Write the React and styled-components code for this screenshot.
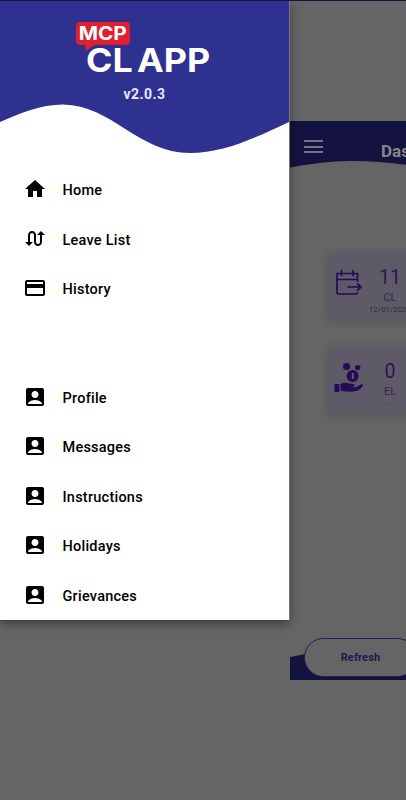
import React from "react";
import styled, { createGlobalStyle } from "styled-components";
import { MdHome, MdSwapCalls, MdCreditCard, MdAccountBox } from "react-icons/md";

const Global = createGlobalStyle`
  * { box-sizing: border-box; }
  body { margin: 0; background: #656565; font-family: Roboto, sans-serif; }
`;

const Screen = styled.div`
  display: grid;
  grid-template-columns: 290px 116px;
  width: 406px;
  height: 800px;
  overflow: hidden;
  background: #656565;
  border-top: 1px solid #15133c;
`;

const Drawer = styled.nav`
  height: 620px;
  background: #fff;
  box-shadow: 0 3px 9px rgba(0, 0, 0, 0.38);
  border-bottom: 1px solid #444;
  border-right: 1px solid #777;
  z-index: 1;
`;

const Header = styled.header`
  position: relative;
  height: 165px;
  padding-top: 21px;
`;

const HeaderWave = styled.svg`
  position: absolute;
  inset: 0;
  display: block;
`;

const Logo = styled.div`
  position: relative;
  width: 140px;
  height: 53px;
  margin-left: 76px;
  color: #fff;
  font-family: Inter, sans-serif;
`;

const LogoBubble = styled.div`
  width: 54px;
  height: 23px;
  border-radius: 4px;
  background: #e0202f;
`;

const BubbleTail = styled.svg`
  position: absolute;
  left: 8px;
  top: 22px;
`;

const LogoTag = styled.div`
  padding-left: 2.5px;
  font-size: 19px;
  font-weight: 700;
  line-height: 24px;
  transform: scaleX(1.09);
  transform-origin: left;
`;

const LogoName = styled.div`
  position: relative;
  display: flex;
  gap: 4px;
  width: max-content;
  margin-left: 9.5px;
  font-size: 33px;
  font-weight: 700;
  line-height: 30px;
  white-space: nowrap;
  transform: scaleX(1.085);
  transform-origin: left;
`;

const Version = styled.div`
  position: relative;
  margin-top: 10px;
  text-align: center;
  color: #e8e8ff;
  font-size: 14px;
  font-weight: 700;
  line-height: 18px;
  letter-spacing: 0.45px;
`;

const Menu = styled.div`
  display: flex;
  flex-direction: column;
  gap: 59px;
`;

const MenuGroup = styled.div`
  display: grid;
  grid-auto-rows: 49.5px;
`;

const MenuItem = styled.a`
  display: flex;
  align-items: center;
  gap: 15.2px;
  padding-left: 23.3px;
  color: #000;
  font-size: 14.5px;
  font-weight: 500;
  letter-spacing: 0.24px;
  svg { width: 24px; height: 24px; margin-top: -3px; }
`;

const Dashboard = styled.main`
  display: flex;
  flex-direction: column;
  width: 290px;
  height: 559px;
  margin-top: 120px;
`;

const TopBar = styled.header`
  position: relative;
  display: flex;
  height: 50px;
`;

const TopWave = styled.svg`
  position: absolute;
  inset: 0;
`;

const MenuButton = styled.div`
  position: relative;
  display: flex;
  flex-direction: column;
  gap: 3.5px;
  margin: 19px 0 0 14px;
`;

const MenuBar = styled.span`
  width: 19px;
  height: 2px;
  background: #73738a;
`;

const Title = styled.h1`
  position: relative;
  margin: 20px 0 0 58px;
  color: #85858c;
  font-size: 17px;
  font-weight: 700;
  line-height: 20px;
`;

const Cards = styled.section`
  display: flex;
  flex-direction: column;
  gap: 28px;
  margin: 82px 0 0 38px;
`;

const Card = styled.article`
  display: flex;
  height: 66px;
  width: 214px;
  border-radius: 3px;
  background: #5f5a67;
  box-shadow: 0 2px 8px rgba(45, 40, 50, 0.28);
  color: #28194e;
`;

const CardArt = styled.svg`
  flex: none;
  margin: 15px 0 0 6px;
`;

const Figures = styled.div`
  display: flex;
  flex-direction: column;
  align-items: center;
  width: 54px;
  margin-left: -3px;
  padding-top: 12.5px;
`;

const Count = styled.div`
  font-size: 19.5px;
  line-height: 24px;
`;

const Kind = styled.div`
  color: #32294c;
  font-size: 11px;
  line-height: 15px;
`;

const Since = styled.div`
  color: #302a40;
  font-size: 7.5px;
  line-height: 9px;
  letter-spacing: 0.2px;
`;

const Footer = styled.footer`
  position: relative;
  height: 42px;
  margin-top: auto;
`;

const FooterWave = styled.svg`
  position: absolute;
  inset: 0;
`;

const Refresh = styled.button`
  position: relative;
  display: block;
  width: 113px;
  height: 39px;
  margin: 0 0 0 14px;
  padding: 0;
  border: 1px solid #22205a;
  border-radius: 20px;
  background: #656565;
  color: #1d1a50;
  font: 700 11px/38px Roboto, sans-serif;
  letter-spacing: 0.15px;
`;

const mainItems = [
  [MdHome, "Home"],
  [MdSwapCalls, "Leave List"],
  [MdCreditCard, "History"],
];
const otherItems = ["Profile", "Messages", "Instructions", "Holidays", "Grievances"].map((n) => [MdAccountBox, n]);

function Group({ items }) {
  return (
    <MenuGroup>
      {items.map(([Icon, name]) => (
        <MenuItem key={name}><Icon />{name}</MenuItem>
      ))}
    </MenuGroup>
  );
}

function CalendarArt() {
  return (
    <CardArt width="32" height="30" fill="none" stroke="#230c55" strokeWidth="1.7" strokeLinecap="round" strokeLinejoin="round">
      <path d="M23.500 13V5.500H3V24Q3 26 5 26H22Q23.500 26 23.500 24.500M3 11.500H23.500M7.500 2.500V7.500M19 2.500V7.500M14 19H27M23.500 15.800L27 19L23.500 22.200" />
    </CardArt>
  );
}

function CoinsArt() {
  return (
    <CardArt width="32" height="32" fill="#230c55">
      <circle cx="12.500" cy="4.500" r="3.500" />
      <circle cx="23.700" cy="5.600" r="2.700" />
      <circle cx="18.600" cy="14" r="6" />
      <path d="M17.800 11H19.800V17H17.800Z" fill="#5f5a67" />
      <rect x="0.500" y="22" width="4.800" height="8" />
      <path d="M6.500 22.300Q9.500 19.300 13 21.100Q14.500 21.800 18.500 21.800Q21 22 20.500 23.800Q20.200 24.800 16.500 24.800L21 25.300Q23.500 24.800 25.500 23.100Q28 21.800 29.500 22.800Q25.500 29.500 19.500 29.500Q13.500 30 6.500 28.800Z" />
    </CardArt>
  );
}

export default function App() {
  return (
    <>
      <Global />
      <Screen>
        <Drawer>
          <Header>
            <HeaderWave width="289" height="164">
              <path fill="#2f3190" d="M0 0H290V120.500C255 137 224 152 190 152C138 152 112 104 63 103.500C40 103.500 21 112 0 121Z" />
            </HeaderWave>
            <Logo>
              <LogoBubble><LogoTag>MCP</LogoTag></LogoBubble>
              <BubbleTail width="14" height="8"><path fill="#e0202f" d="M1 0H12L2 7Z" /></BubbleTail>
              <LogoName><span>CL</span><span>APP</span></LogoName>
            </Logo>
            <Version>v2.0.3</Version>
          </Header>
          <Menu>
            <Group items={mainItems} />
            <Group items={otherItems} />
          </Menu>
        </Drawer>
        <Dashboard>
          <TopBar>
            <TopWave width="290" height="50">
              <path fill="#14133f" d="M0 0H290V60C200 70 150 40 60 40C39 40 20 43 0 46.500Z" />
            </TopWave>
            <MenuButton><MenuBar /><MenuBar /><MenuBar /></MenuButton>
            <Title>Dashboard</Title>
          </TopBar>
          <Cards>
            <Card>
              <CalendarArt />
              <Figures><Count>11</Count><Kind>CL</Kind><Since>12/01/2024</Since></Figures>
            </Card>
            <Card>
              <CoinsArt />
              <Figures><Count>0</Count><Kind>EL</Kind><Since>-</Since></Figures>
            </Card>
          </Cards>
          <Footer>
            <FooterWave width="290" height="42">
              <path fill="#14133f" d="M0 19L20 15L60 12L290 30V42H0Z" />
            </FooterWave>
            <Refresh>Refresh</Refresh>
          </Footer>
        </Dashboard>
      </Screen>
    </>
  );
}
